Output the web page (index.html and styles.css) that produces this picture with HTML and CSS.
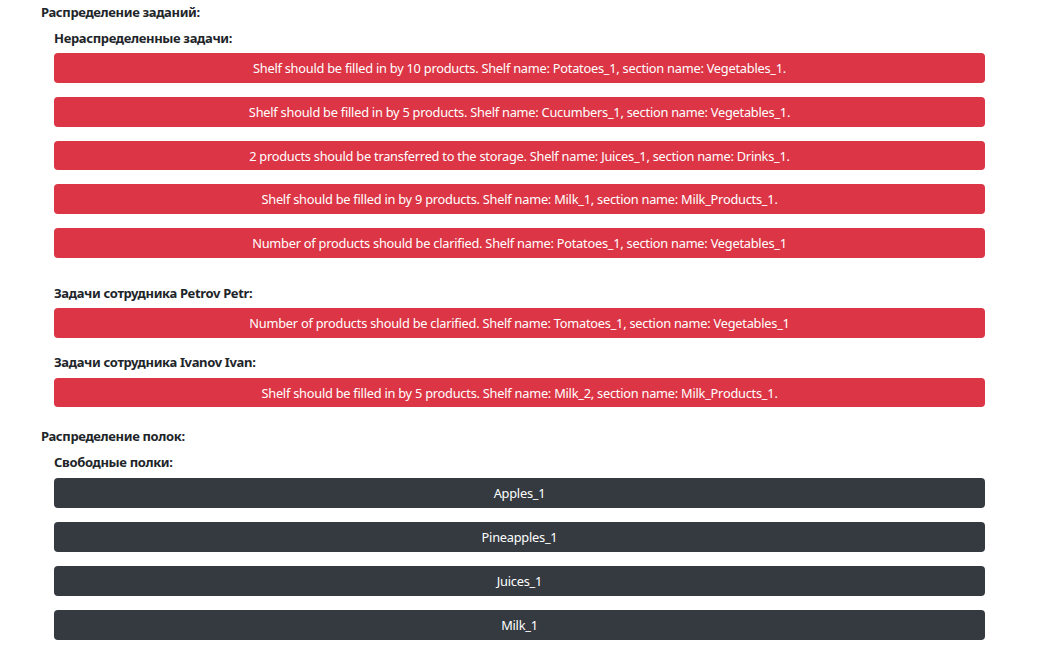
FILE: index.html
```html
<!DOCTYPE html>
<html lang="ru">
<head>
<meta charset="utf-8">
<title>Распределение</title>
<link rel="stylesheet" href="styles.css">
</head>
<body>
<div class="page">
  <section class="section">
    <div class="title">Распределение заданий:</div>
    <div class="group group-unassigned">
      <div class="subtitle">Нераспределенные задачи:</div>
      <div class="item item-danger">Shelf should be filled in by 10 products. Shelf name: Potatoes_1, section name: Vegetables_1.</div>
      <div class="item item-danger">Shelf should be filled in by 5 products. Shelf name: Cucumbers_1, section name: Vegetables_1.</div>
      <div class="item item-danger">2 products should be transferred to the storage. Shelf name: Juices_1, section name: Drinks_1.</div>
      <div class="item item-danger">Shelf should be filled in by 9 products. Shelf name: Milk_1, section name: Milk_Products_1.</div>
      <div class="item item-danger">Number of products should be clarified. Shelf name: Potatoes_1, section name: Vegetables_1</div>
    </div>
    <div class="group">
      <div class="subtitle">Задачи сотрудника Petrov Petr:</div>
      <div class="item item-danger">Number of products should be clarified. Shelf name: Tomatoes_1, section name: Vegetables_1</div>
    </div>
    <div class="group">
      <div class="subtitle">Задачи сотрудника Ivanov Ivan:</div>
      <div class="item item-danger">Shelf should be filled in by 5 products. Shelf name: Milk_2, section name: Milk_Products_1.</div>
    </div>
  </section>
  <section class="section">
    <div class="title">Распределение полок:</div>
    <div class="group group-shelves">
      <div class="subtitle">Свободные полки:</div>
      <div class="item item-dark">Apples_1</div>
      <div class="item item-dark">Pineapples_1</div>
      <div class="item item-dark">Juices_1</div>
      <div class="item item-dark">Milk_1</div>
    </div>
  </section>
</div>
</body>
</html>
```
FILE: styles.css
```css
html, body {
  margin: 0;
  padding: 0;
  background: #ffffff;
}
body {
  font-family: "Noto Sans", "Open Sans", sans-serif;
  font-size: 12.8px;
  letter-spacing: -0.24px;
  line-height: 19.5px;
  color: #212529;
}
.page {
  padding: 2.5px 54px 0 41px;
}
.section + .section {
  margin-top: 20px;
}
.title {
  font-weight: 700;
  font-size: 13px;
  letter-spacing: -0.35px;
  line-height: 19.5px;
  margin-bottom: 6.5px;
}
.group {
  padding-left: 13px;
}
.subtitle {
  font-weight: 700;
  font-size: 13px;
  letter-spacing: -0.35px;
  line-height: 19.5px;
  margin-bottom: 5px;
}
.group-unassigned {
  margin-bottom: 26px;
}
.item {
  box-sizing: border-box;
  height: 29.75px;
  padding-top: 2px;
  display: flex;
  align-items: center;
  justify-content: center;
  border-radius: 4px;
  color: #ffffff;
  margin-bottom: 14px;
  white-space: nowrap;
}
.group .item:last-child {
  margin-bottom: 15px;
}
.group-unassigned .item:last-child {
  margin-bottom: 0;
}
.group-shelves .item {
  height: 30px;
}
.item-danger {
  background: #dc3545;
}
.item-dark {
  background: #343a40;
}
```
